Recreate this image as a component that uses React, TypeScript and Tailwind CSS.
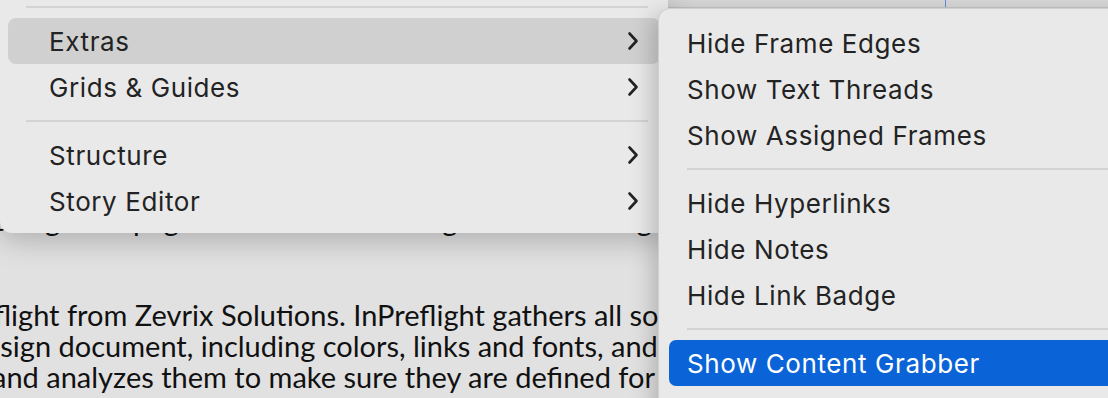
import React from "react";

const menuFont = { fontFamily: "Inter, 'Noto Sans', sans-serif" };
const docFont = { fontFamily: "Lato, 'Open Sans', sans-serif" };

function Chevron() {
  return (
    <svg width="12" height="20" viewBox="0 0 12 20" className="shrink-0">
      <path d="M2.5 2.5 L9.5 10 L2.5 17.5" fill="none" stroke="#222" strokeWidth="2.6" strokeLinecap="round" strokeLinejoin="round" />
    </svg>
  );
}

function LeftRow({ label, active }: { label: string; active?: boolean }) {
  return (
    <div className="h-[46px] px-2">
      <div className={`flex h-full items-center justify-between rounded-[8px] pl-[41px] pr-[21px] ${active ? "bg-[#d0d0d0]" : ""}`}>
        <span className="text-[26px] tracking-[0.6px] text-[#232323]">{label}</span>
        <Chevron />
      </div>
    </div>
  );
}

function LeftSep() {
  return (
    <div className="flex h-[22px] items-center pl-[26px] pr-[20px]">
      <div className="h-[2px] w-full bg-[#d3d3d3]" />
    </div>
  );
}

function SubRow({ label, active }: { label: string; active?: boolean }) {
  return (
    <div className="h-[46px] pl-[10px]">
      <div className={`flex h-full items-center rounded-l-[7px] pl-[18px] ${active ? "bg-[#0a64d8] text-white" : "text-[#232323]"}`}>
        <span className="text-[26px] tracking-[0.6px]">{label}</span>
      </div>
    </div>
  );
}

function SubSep() {
  return (
    <div className="flex h-[22px] items-center pl-[28px]">
      <div className="h-[2px] w-full bg-[#d3d3d3]" />
    </div>
  );
}

export default function App() {
  return (
    <div className="relative h-[398px] w-[1108px] overflow-hidden bg-[#e1e1e1]">
      {/* document */}
      <div className="flex h-full flex-col" style={docFont}>
        <div className="relative h-[8px] border-b border-[#c4c4c4] bg-[#d7d7d7]">
          <div className="absolute left-[945px] top-0 h-full w-px bg-[#5b8fe0]" />
        </div>
        <div className="ml-[-6px] mt-[196px] whitespace-nowrap text-[29px] leading-[32px] text-[#111]">
          <div>design the pages of a brochure using fonts and images placed</div>
        </div>
        <div className="ml-[-6px] mt-[63px] whitespace-nowrap text-[29px] leading-[31px] text-[#111]">
          <div>flight from Zevrix Solutions. InPreflight gathers all sources</div>
          <div className="ml-[-9px]">esign document, including colors, links and fonts, and checks</div>
          <div className="ml-[-2px]">and analyzes them to make sure they are defined for their intended use.</div>
        </div>
      </div>

      {/* main menu */}
      <div
        className="absolute left-0 top-[-4px] w-[668px] rounded-b-[12px] bg-[#e9e9e9] pb-[9px] shadow-[0_8px_28px_rgba(0,0,0,0.22)]"
        style={menuFont}
      >
        <LeftSep />
        <LeftRow label="Extras" active />
        <LeftRow label="Grids & Guides" />
        <LeftSep />
        <LeftRow label="Structure" />
        <LeftRow label="Story Editor" />
      </div>

      {/* submenu */}
      <div
        className="absolute left-[658px] top-[8px] h-[420px] w-[470px] rounded-tl-[12px] border-l border-t border-[#cfcfcf] bg-[#e9e9e9] pt-[11px] shadow-[-6px_6px_22px_rgba(0,0,0,0.2)]"
        style={menuFont}
      >
        <SubRow label="Hide Frame Edges" />
        <SubRow label="Show Text Threads" />
        <SubRow label="Show Assigned Frames" />
        <SubSep />
        <SubRow label="Hide Hyperlinks" />
        <SubRow label="Hide Notes" />
        <SubRow label="Hide Link Badge" />
        <SubSep />
        <SubRow label="Show Content Grabber" active />
        <SubRow label="Hide Live Corners" />
      </div>
    </div>
  );
}
